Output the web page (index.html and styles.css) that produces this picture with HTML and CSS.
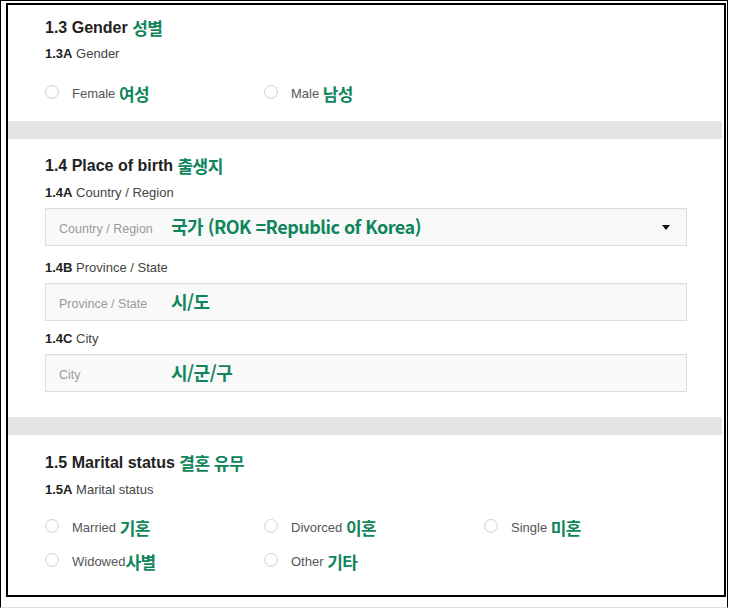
FILE: index.html
```html
<!DOCTYPE html>
<html lang="ko">
<head>
    <meta charset="UTF-8">
    <meta name="viewport" content="width=device-width, initial-scale=1.0">
    <title>Personal details</title>
    <link rel="stylesheet" href="styles.css">
</head>
<body>

    <div class="frame">
        <div class="sheet">

            <!-- 1.3 GENDER -->
            <section class="block block-gender">
                <h3 class="block-title">1.3 Gender <span class="ko">성별</span></h3>
                <p class="field-label"><b>1.3A</b> Gender</p>
                <div class="choices">
                    <label class="choice"><input type="radio" name="gender">Female <span class="ko">여성</span></label>
                    <label class="choice"><input type="radio" name="gender">Male <span class="ko">남성</span></label>
                </div>
            </section>

            <div class="divider"></div>

            <!-- 1.4 PLACE OF BIRTH -->
            <section class="block block-birth">
                <h3 class="block-title">1.4 Place of birth <span class="ko">출생지</span></h3>

                <div class="field field-country">
                    <p class="field-label"><b>1.4A</b> Country / Region</p>
                    <div class="box">
                        <span class="placeholder">Country / Region</span>
                        <span class="ko">국가 (ROK =Republic of Korea)</span>
                        <span class="caret"></span>
                    </div>
                </div>

                <div class="field field-province">
                    <p class="field-label"><b>1.4B</b> Province / State</p>
                    <div class="box">
                        <span class="placeholder">Province / State</span>
                        <span class="ko">시/도</span>
                    </div>
                </div>

                <div class="field field-city">
                    <p class="field-label"><b>1.4C</b> City</p>
                    <div class="box">
                        <span class="placeholder">City</span>
                        <span class="ko">시/군/구</span>
                    </div>
                </div>
            </section>

            <div class="divider"></div>

            <!-- 1.5 MARITAL STATUS -->
            <section class="block block-marital">
                <h3 class="block-title">1.5 Marital status <span class="ko">결혼 유무</span></h3>
                <p class="field-label"><b>1.5A</b> Marital status</p>
                <div class="choices">
                    <label class="choice"><input type="radio" name="marital">Married <span class="ko">기혼</span></label>
                    <label class="choice"><input type="radio" name="marital">Divorced <span class="ko">이혼</span></label>
                    <label class="choice"><input type="radio" name="marital">Single <span class="ko">미혼</span></label>
                    <label class="choice"><input type="radio" name="marital">Widowed<span class="ko">사별</span></label>
                    <label class="choice"><input type="radio" name="marital">Other <span class="ko">기타</span></label>
                </div>
            </section>

        </div>
    </div>

</body>
</html>
```

FILE: styles.css
```css
/* Global Styles */
* {
    margin: 0;
    padding: 0;
    box-sizing: border-box;
}

body {
    background: #ffffff;
    font-family: "Liberation Sans", Arial, sans-serif;
    color: #333333;
}

/* OUTER FRAME */
.frame {
    width: 728px;
    height: 608px;
    border: 1px solid #000000;
    border-bottom-color: #dddddd;
    padding: 2px 1px 0 5px;
}

.sheet {
    height: 594px;
    border: 2px solid #000000;
    padding-right: 2px;
    overflow: hidden;
}

/* SECTIONS */
.block {
    padding: 0 35px 0 37px;
}

.block-gender {
    padding-top: 13px;
    padding-bottom: 16px;
}

.block-birth {
    padding-top: 17px;
    padding-bottom: 25px;
}

.block-marital {
    padding-top: 18px;
}

.divider {
    height: 18px;
    background: #e4e4e4;
}

.block-title {
    font-size: 16px;
    line-height: 20px;
    font-weight: 700;
    color: #222222;
}

.field-label {
    margin-top: 8px;
    font-size: 13px;
    line-height: 16px;
    color: #444444;
}

.block-birth .field-label,
.block-marital .field-label {
    margin-top: 9px;
}

.field-label b {
    color: #222222;
}

/* KOREAN NOTES */
.ko {
    font-family: "Noto Sans CJK KR", sans-serif;
    font-weight: 700;
    font-size: 17px;
    line-height: 1;
    letter-spacing: -0.6px;
    color: #10855b;
}

.block-title .ko {
    line-height: 16px;
    letter-spacing: -0.5px;
    vertical-align: -2px;
}

/* INPUT BOXES */
.field-province {
    margin-top: 14px;
}

.field-city {
    margin-top: 10px;
}

.box {
    display: flex;
    align-items: center;
    height: 38px;
    margin-top: 7px;
    padding-left: 13px;
    border: 1px solid #dcdcdc;
    background: #f9f9f9;
    box-shadow: inset 0 1px 2px rgba(0, 0, 0, 0.03);
}

.placeholder {
    width: 112px;
    margin-top: 3px;
    font-size: 12.5px;
    color: #999999;
}

.box .ko {
    font-size: 18px;
    letter-spacing: -0.5px;
    margin-bottom: 2px;
}

.caret {
    margin-left: auto;
    margin-right: 16px;
    border-top: 5px solid #111111;
    border-left: 4px solid transparent;
    border-right: 4px solid transparent;
}

/* RADIO CHOICES */
.choices {
    display: grid;
    grid-template-columns: 219px 220px 220px;
    row-gap: 10px;
    margin-top: 19px;
}

.block-marital .choices {
    margin-top: 17px;
}

.choice {
    display: flex;
    align-items: center;
    height: 24px;
    font-size: 13px;
    color: #555555;
    white-space: pre;
}

.choice input {
    appearance: none;
    width: 14px;
    height: 14px;
    margin: 0 13px 2px 0;
    border: 1px solid #d6d6d6;
    border-radius: 50%;
    background: radial-gradient(circle at 50% 40%, #ffffff 40%, #f1f1f1 100%);
}
```
